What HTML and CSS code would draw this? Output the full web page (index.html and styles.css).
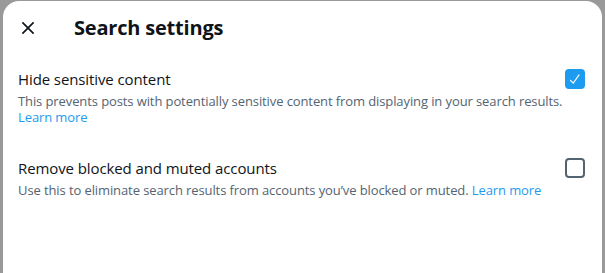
FILE: index.html
```html
<!DOCTYPE html>
<html>
<head>
<meta charset="utf-8">
<link rel="stylesheet" href="styles.css">
</head>
<body>
<div class="backdrop">
  <div class="modal">
    <div class="header">
      <button class="close" aria-label="Close">
        <svg viewBox="0 0 24 24" width="20" height="20"><path d="M10.59 12L4.54 5.96l1.42-1.42L12 10.59l6.04-6.05 1.42 1.42L13.41 12l6.05 6.04-1.42 1.42L12 13.41l-6.04 6.05-1.42-1.42L10.59 12z"/></svg>
      </button>
      <h1 class="title">Search settings</h1>
    </div>
    <div class="setting">
      <div class="setting-top">
        <span class="label">Hide sensitive content</span>
        <span class="checkbox checked">
          <svg viewBox="0 0 24 24" width="14" height="14"><path d="M9 20c-.264 0-.52-.104-.707-.293l-4.785-4.785c-.39-.39-.39-1.023 0-1.414s1.023-.39 1.414 0l3.946 3.945L18.075 4.41c.32-.45.94-.558 1.395-.24.45.318.56.942.24 1.394L9.817 19.577c-.17.24-.438.395-.732.42-.028.002-.057.003-.085.003z"/></svg>
        </span>
      </div>
      <p class="desc">This prevents posts with potentially sensitive content from displaying in your search results. <a href="#" class="link">Learn more</a></p>
    </div>
    <div class="setting">
      <div class="setting-top">
        <span class="label">Remove blocked and muted accounts</span>
        <span class="checkbox"></span>
      </div>
      <p class="desc">Use this to eliminate search results from accounts you’ve blocked or muted. <a href="#" class="link">Learn more</a></p>
    </div>
  </div>
</div>
</body>
</html>
```
FILE: styles.css
```css
html, body {
  margin: 0;
  padding: 0;
  height: 100%;
  overflow: hidden;
}
body {
  background: #999999;
  font-family: "Open Sans", Roboto, "Liberation Sans", sans-serif;
  -webkit-font-smoothing: antialiased;
}
.backdrop {
  padding: 1px 3px 0 3px;
}
.modal {
  background: #ffffff;
  border-radius: 16px 16px 0 0;
  height: 272px;
  overflow: hidden;
}
.header {
  display: flex;
  align-items: center;
  height: 53px;
  padding: 0 16px 0 8px;
}
.close {
  width: 34px;
  height: 34px;
  display: flex;
  align-items: center;
  justify-content: center;
  border: 0;
  background: transparent;
  padding: 0;
  margin-right: 29px;
}
.close svg { fill: #0f1419; }
.title {
  margin: 0;
  font-size: 20px;
  font-weight: 700;
  color: #0f1419;
  line-height: 24px;
  letter-spacing: -0.2px;
}
.setting {
  padding: 11px 17px 12px 15px;
}
.setting + .setting {
  padding-top: 17px;
}
.setting-top {
  display: flex;
  align-items: center;
  justify-content: space-between;
  min-height: 28px;
}
.label {
  font-size: 15px;
  color: #0f1419;
  line-height: 20px;
  letter-spacing: -0.1px;
}
.checkbox {
  width: 20px;
  height: 20px;
  box-sizing: border-box;
  border: 2px solid #536471;
  border-radius: 4px;
  display: flex;
  align-items: center;
  justify-content: center;
}
.checkbox.checked {
  background: #1d9bf0;
  border-color: #1d9bf0;
}
.checkbox svg { fill: #ffffff; }
.desc {
  margin: 0;
  font-size: 13px;
  line-height: 16px;
  color: #536471;
  letter-spacing: -0.1px;
}
.link {
  color: #1d9bf0;
  text-decoration: none;
}
```
